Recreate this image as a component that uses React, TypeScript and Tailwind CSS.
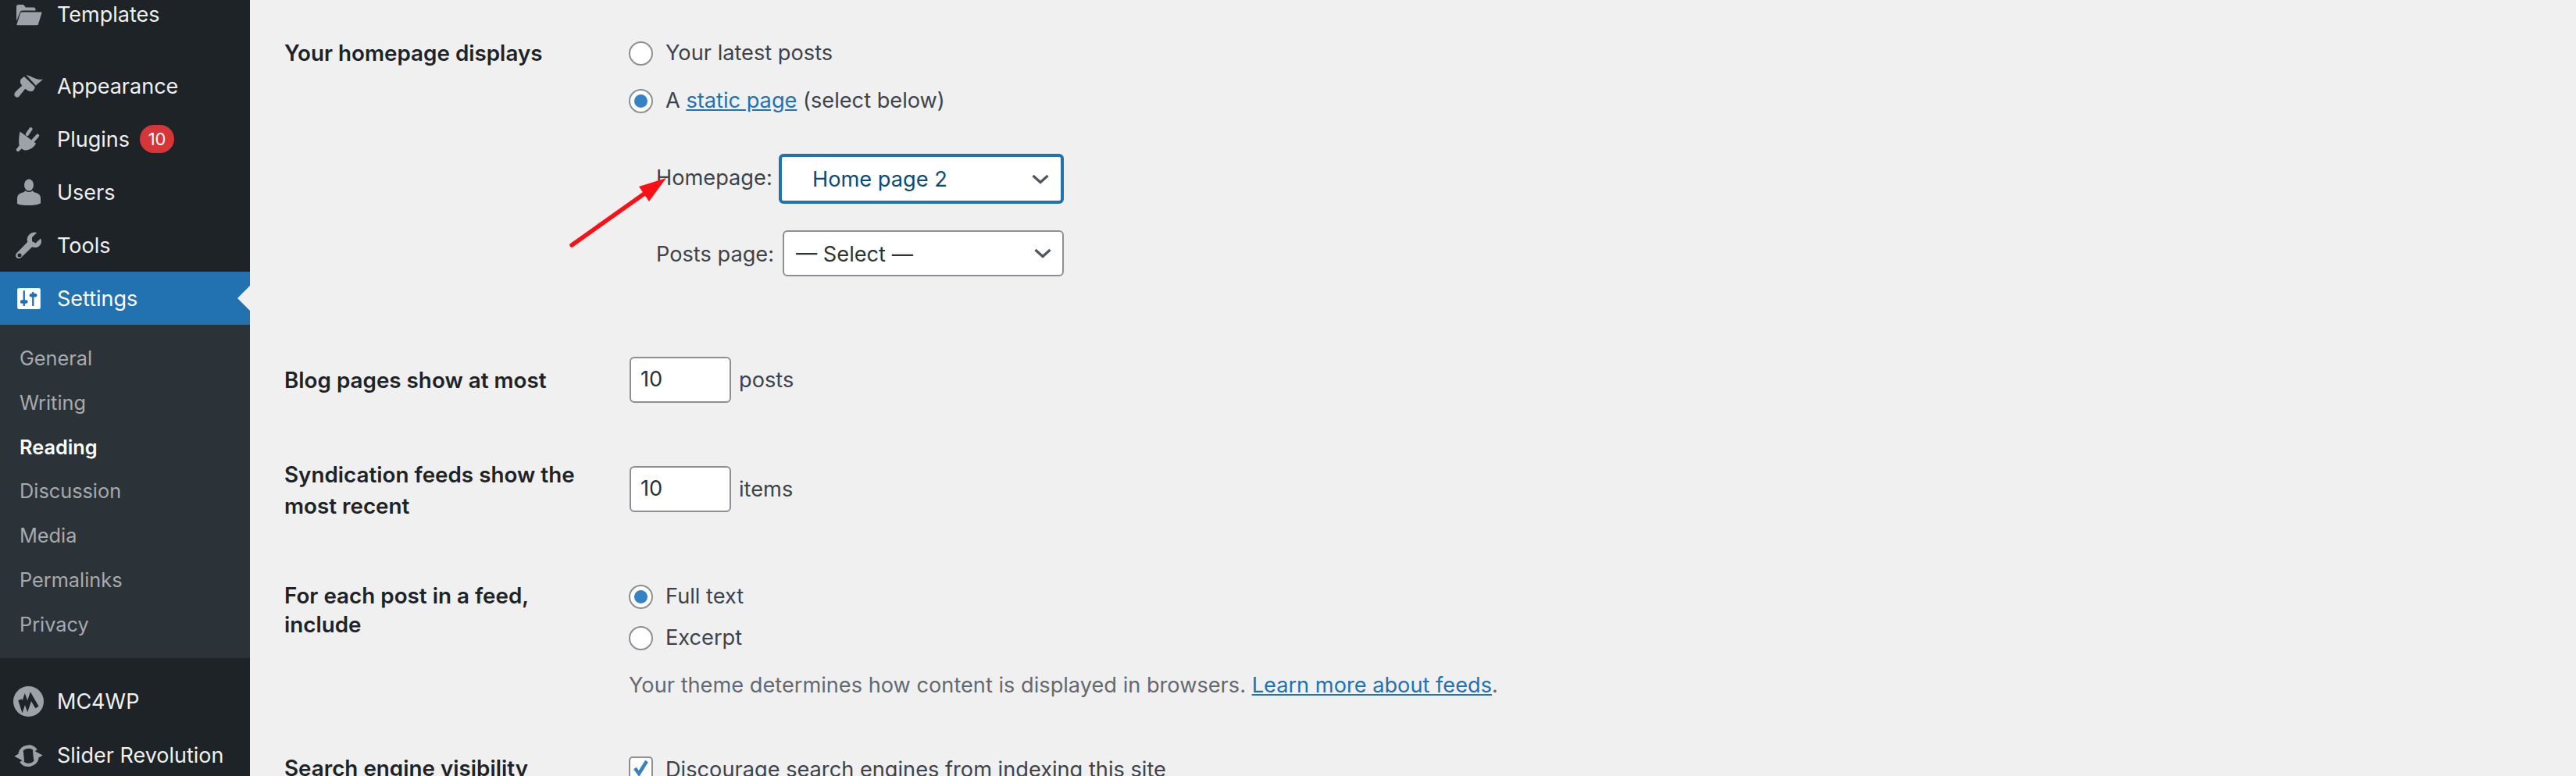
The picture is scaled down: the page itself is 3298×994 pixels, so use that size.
import type { ReactNode } from 'react';

const FONT = 'font-["Inter","Liberation_Sans",sans-serif]';

// ── Sidebar icons (dashicons, redrawn) ────────────────────────────────────────

const FolderIcon = () => (
  <svg width="34" height="28" viewBox="0 0 34 28" fill="#9ca2a7">
    <path d="M1 3.500C1 2 2 1 3.500 1h6.500l3 3.500h10c1.400 0 2.500 1 2.500 2.500v1.500H9c-1.600 0-2.800.8-3.400 2.200L1 22Z" />
    <path d="M8 10.500h24.500c.8 0 1.200.6.9 1.300L29 26c-.3.8-1 1.200-1.800 1.200H2.500c-.9 0-1.300-.6-1-1.300L6 12c.3-.9 1.100-1.500 2-1.500Z" />
  </svg>
);

const BrushIcon = () => (
  <svg width="39" height="33" viewBox="20 22 118 100" fill="#9ca2a7">
    <path d="M70 28C88 30 108 50 135 45 124 56 114 62 108 70Z" />
    <path d="M62 34 104 74C102 84 98 92 88 92 80 92 72 86 66 82L42 112C36 118 24 114 24 104 24 98 28 94 34 88L54 70C48 62 44 52 50 44Z" />
  </svg>
);

const PluginIcon = () => (
  <svg width="37" height="33" viewBox="24 32 110 100" fill="#9ca2a7">
    <path d="M46 52 108 98C100 112 88 122 72 124 64 125 58 122 52 118L42 128C36 132 28 124 33 118L43 106C40 90 42 68 46 52Z" />
    <path d="M88 42 74 62M114 68 96 88" stroke="#9ca2a7" strokeWidth="13" strokeLinecap="round" fill="none" />
  </svg>
);

const UserIcon = () => (
  <svg width="30" height="34" viewBox="0 0 30 34" fill="#9ca2a7">
    <ellipse cx="15" cy="8" rx="6" ry="7.500" />
    <path d="M10.500 15c1 2.500 8 2.500 9 0 1 2 3 2.500 6 3.500 3 1 4.500 3 4.500 7v6c-4 2-10 2.500-15 2.500S4 34 0 32v-6.500c0-4 1.500-6 4.500-7 3-1 5-1.500 6-3.500Z" />
  </svg>
);

const WrenchIcon = () => (
  <svg width="34" height="34" viewBox="0 0 34 34" fill="#9ca2a7">
    <path fillRule="evenodd" d="M24.500.500c1 0 2 .2 2.800.6L21 7v5l4.500 2.500 6.500-6c.6 1 1 2.300 1 3.500 0 5-4 8.500-9 8-1 0-2-.3-2.800-.7L7 33c-2 1.800-5 1.500-6.200-.4C-.5 30.800 0 28.500 1.500 27L15.200 13c-.3-1-.5-2-.5-3C14.700 5 19 .5 24.500.500ZM5 27.500a2.500 2.500 0 1 0 0 5 2.500 2.500 0 0 0 0-5Z" />
  </svg>
);

const SettingsIcon = () => (
  <svg width="30" height="27" viewBox="37 40 90 82">
    <rect x="37" y="40" width="90" height="82" rx="6" fill="#fff" />
    <path d="M63 50v60M98 55v55" stroke="#2271b1" strokeWidth="7" />
    <path d="M55 93h16M91 68h16" stroke="#2271b1" strokeWidth="14" strokeLinecap="round" />
  </svg>
);

const Mc4wpIcon = () => (
  <svg width="39" height="39" viewBox="20 22 118 118">
    <circle cx="79" cy="81" r="59" fill="#9ca2a7" />
    <path d="M46 74l9 28 10-30 10 28 13-38 24 42" fill="none" stroke="#1d2327" strokeWidth="15" />
  </svg>
);

const SyncIcon = () => (
  <svg width="39" height="31" viewBox="20 240 116 92" fill="#9ca2a7">
    <path d="M45 280A34 34 0 0 1 106 268M111 296A34 34 0 0 1 50 308" fill="none" stroke="#9ca2a7" strokeWidth="13" />
    <path d="M24 290 58 270 62 310ZM132 286 98 306 94 266Z" />
  </svg>
);

// ── Sidebar rows ──────────────────────────────────────────────────────────────

const MenuItem = ({ icon, label, children }: { icon: ReactNode; label: string; children?: ReactNode }) => (
  <div className="flex h-[68px] shrink-0 items-center text-[27px] text-[#f0f0f1]">
    <span className="flex w-[73px] shrink-0 items-center justify-center">{icon}</span>
    <span className="pt-[2px]">{label}</span>
    {children}
  </div>
);

const SubItem = ({ label, active }: { label: string; active?: boolean }) => (
  <div className={`flex h-[56.700px] shrink-0 items-center pl-[25px] pt-[2px] text-[25.300px] ${active ? 'font-semibold text-white' : 'text-[#a7aaad]'}`}>
    {label}
  </div>
);

const Sidebar = () => (
  <aside className="flex w-[320px] shrink-0 flex-col bg-[#1d2327]">
    <div className="flex h-[37px] shrink-0 items-center text-[27px] text-[#f0f0f1]">
      <span className="flex w-[73px] shrink-0 items-center justify-center"><FolderIcon /></span>
      <span className="pt-[2px]">Templates</span>
    </div>
    <div className="h-[39px] shrink-0" />
    <MenuItem icon={<BrushIcon />} label="Appearance" />
    <MenuItem icon={<PluginIcon />} label="Plugins">
      <span className="ml-[13px] flex h-[36px] w-[44px] items-center justify-center rounded-full bg-[#d63638] text-[22px] text-white">10</span>
    </MenuItem>
    <MenuItem icon={<UserIcon />} label="Users" />
    <MenuItem icon={<WrenchIcon />} label="Tools" />
    <div className="relative flex h-[68px] shrink-0 items-center bg-[#2271b1] text-[27px] text-white">
      <span className="flex w-[73px] shrink-0 items-center justify-center"><SettingsIcon /></span>
      <span className="pt-[2px]">Settings</span>
      <span className="absolute right-0 top-[18px] h-0 w-0 border-y-[16px] border-r-[16px] border-y-transparent border-r-[#f0f0f1]" />
    </div>
    <div className="flex h-[427px] shrink-0 flex-col bg-[#2c3338] pt-[14px]">
      <SubItem label="General" />
      <SubItem label="Writing" />
      <SubItem label="Reading" active />
      <SubItem label="Discussion" />
      <SubItem label="Media" />
      <SubItem label="Permalinks" />
      <SubItem label="Privacy" />
    </div>
    <div className="h-[21px] shrink-0" />
    <MenuItem icon={<Mc4wpIcon />} label="MC4WP" />
    <div className="h-[1px] shrink-0" />
    <MenuItem icon={<SyncIcon />} label="Slider Revolution" />
  </aside>
);

// ── Form controls ─────────────────────────────────────────────────────────────

const Radio = ({ checked }: { checked?: boolean }) => (
  <span className="flex h-[31px] w-[31px] shrink-0 items-center justify-center rounded-full border-2 border-[#8c8f94] bg-white">
    {checked && <span className="h-[17px] w-[17px] rounded-full bg-[#3582c4]" />}
  </span>
);

const Chevron = () => (
  <svg width="22" height="13" viewBox="0 0 22 13" fill="none" stroke="#50575e" strokeWidth="3.200">
    <path d="M1.500 2l9.500 8.500L20.500 2" />
  </svg>
);

const NumberBox = () => (
  <span className="ml-[1px] flex h-[59px] w-[130px] items-center rounded-[6px] border-2 border-[#8c8f94] bg-white pl-[12px] text-[#2c3338]">10</span>
);

const RowLabel = ({ children, leading = 'leading-[40px]' }: { children: ReactNode; leading?: string }) => (
  <div className={`w-[441px] shrink-0 pr-[40px] text-[27.800px] font-semibold text-[#1d2327] ${leading}`}>{children}</div>
);

// Red annotation arrow lying over the form
const Arrow = () => (
  <svg className="absolute left-[405px] top-[225px]" width="140" height="100" viewBox="0 0 140 100" fill="none">
    <path d="M7 89 100 23" stroke="#fb1016" strokeWidth="5.500" strokeLinecap="round" />
    <path d="M128 3 93 14l13 19Z" fill="#fb1016" />
  </svg>
);

// ── Settings form ─────────────────────────────────────────────────────────────

const Main = () => (
  <main className="relative min-w-0 flex-1 bg-[#f0f0f1] pl-[44px] text-[27.200px] text-[#3c434a]">
    {/* Your homepage displays */}
    <div className="flex pt-[49px]">
      <RowLabel leading="leading-[38px]">Your homepage displays</RowLabel>
      <div className="flex flex-col">
        <div className="flex h-[38px] items-center gap-[16px]"><Radio /><span>Your latest posts</span></div>
        <div className="mt-[23px] flex h-[38px] items-center gap-[16px]">
          <Radio checked />
          <span>A <span className="text-[#2271b1] underline">static page</span> (select below)</span>
        </div>
        <div className="mt-[49px] flex h-[64px] pl-[35px]">
          <span className="w-[157px] pt-[11px]">Homepage:</span>
          <span className="flex h-[64px] w-[365px] items-center justify-between rounded-[6px] border-[4px] border-[#2271b1] bg-white pl-[39px] pr-[15px] text-[#0a4b78]">
            <span className="pt-[2px]">Home page 2</span>
            <Chevron />
          </span>
        </div>
        <div className="mt-[34px] flex h-[59px] pl-[35px]">
          <span className="w-[162px] pt-[11px]">Posts page:</span>
          <span className="flex h-[59px] w-[360px] items-center justify-between rounded-[6px] border-2 border-[#8c8f94] bg-white pl-[15px] pr-[14px] text-[#2c3338]">
            <span className="pt-[3px]">— Select —</span>
            <Chevron />
          </span>
        </div>
      </div>
    </div>

    {/* Blog pages */}
    <div className="mt-[103px] flex">
      <RowLabel><span className="mt-[10px] block">Blog pages show at most</span></RowLabel>
      <div className="flex items-center gap-[10px]"><NumberBox /><span className="pt-[2px]">posts</span></div>
    </div>

    {/* Syndication feeds */}
    <div className="mt-[72px] flex">
      <RowLabel>Syndication feeds show the most recent</RowLabel>
      <div className="mt-[9px] flex h-[59px] items-center gap-[10px]"><NumberBox /><span className="pt-[2px]">items</span></div>
    </div>

    {/* For each post */}
    <div className="mt-[77px] flex">
      <RowLabel leading="leading-[37px]">For each post in a feed, include</RowLabel>
      <div className="flex flex-col">
        <div className="flex h-[38px] items-center gap-[16px]"><Radio checked /><span>Full text</span></div>
        <div className="mt-[15px] flex h-[38px] items-center gap-[16px]"><Radio /><span>Excerpt</span></div>
        <p className="mt-[23px] leading-[38px] text-[#646970]">
          Your theme determines how content is displayed in browsers. <span className="text-[#2271b1] underline">Learn more about feeds</span>.
        </p>
      </div>
    </div>

    {/* Search engine visibility */}
    <div className="mt-[68px] flex">
      <RowLabel leading="leading-[38px]">Search engine visibility</RowLabel>
      <div className="flex h-[38px] items-center gap-[16px]">
        <span className="flex h-[31px] w-[31px] shrink-0 items-center justify-center rounded-[5px] border-2 border-[#8c8f94] bg-white">
          <svg width="24" height="24" viewBox="0 0 24 24" fill="none" stroke="#3582c4" strokeWidth="4.500"><path d="M4 12l5 7L19 3" /></svg>
        </span>
        <span className="pt-[4px]">Discourage search engines from indexing this site</span>
      </div>
    </div>

    <Arrow />
  </main>
);

export default function App() {
  return (
    <div className={`flex h-[994px] w-[3298px] overflow-hidden ${FONT}`}>
      <Sidebar />
      <Main />
    </div>
  );
}
